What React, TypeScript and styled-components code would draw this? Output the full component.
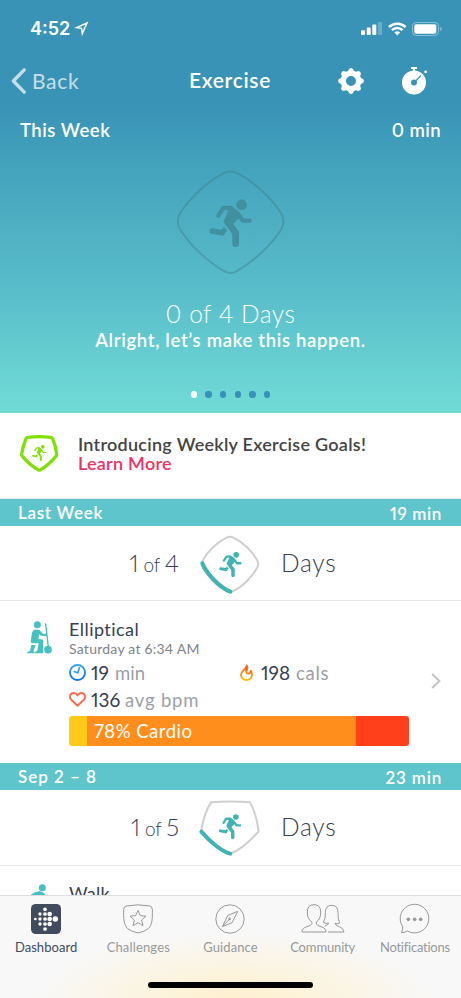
import React from 'react';
import styled, { createGlobalStyle } from 'styled-components';

const GlobalStyle = createGlobalStyle`
  * { box-sizing: border-box; }
  body { margin: 0; background: #fff; font-family: Lato, 'Open Sans', sans-serif; }
  svg { display: block; flex: none; overflow: visible; }
`;

const Screen = styled.div`
  width: 461px;
  height: 998px;
  display: flex;
  flex-direction: column;
  overflow: hidden;
  background: #fff;
`;

const Text = styled.span<{ $size: number; $weight?: number; $track?: number; $color?: string; $drop?: number }>`
  font-size: ${p => p.$size}px;
  font-weight: ${p => p.$weight ?? 400};
  letter-spacing: ${p => p.$track ?? 0}px;
  color: ${p => p.$color ?? 'inherit'};
  padding-top: ${p => p.$drop ?? 0}px;
  font-variant-numeric: proportional-nums;
  white-space: pre;
`;

/* ---------- Header ---------- */

const Header = styled.header`
  height: 413px;
  flex: none;
  display: flex;
  flex-direction: column;
  color: #fff;
  background: linear-gradient(180deg, #3993b6 0, #3993b6 108px, #419fbb 150px, #5bbfcb 300px, #70dcd6 413px);
`;

const StatusBar = styled.div`
  height: 56px;
  padding: 1px 19px 0 30px;
  display: flex;
  align-items: center;
  justify-content: space-between;
`;

const Clock = styled.div`
  display: flex;
  align-items: center;
  gap: 4.5px;
  font: 600 18px/22px Inter, sans-serif;
`;

const StatusIcons = styled.div`
  display: flex;
  align-items: center;
  gap: 6px;
`;

const NavBar = styled.nav`
  height: 50px;
  padding: 0 33px 0 11px;
  display: grid;
  grid-template-columns: 157px 124px 1fr;
  align-items: center;
  line-height: 24px;
`;

const BackLink = styled.div`
  display: flex;
  align-items: center;
  gap: 5px;
  opacity: 0.7;
`;

const NavTitle = styled.div`
  text-align: center;
  padding-bottom: 1px;
`;

const NavActions = styled.div`
  display: flex;
  align-items: center;
  justify-content: flex-end;
  gap: 38px;
`;

const WeekSummary = styled.div`
  height: 48px;
  padding: 0 20px;
  display: flex;
  align-items: center;
  justify-content: space-between;
`;

const Hero = styled.div`
  display: flex;
  flex-direction: column;
  align-items: center;
  padding-top: 14.6px;
`;

const HeroLine = styled.div<{ $height: number; $top?: number }>`
  height: ${p => p.$height}px;
  margin-top: ${p => p.$top ?? 0}px;
  display: flex;
  align-items: center;
`;

const Dots = styled.div`
  display: flex;
  gap: 8.4px;
  margin-top: 37.7px;
`;

const Dot = styled.i<{ $active?: boolean }>`
  width: 6.3px;
  height: 6.3px;
  border-radius: 50%;
  background: ${p => (p.$active ? '#fff' : '#3791b8')};
`;

/* ---------- Body ---------- */

const Content = styled.main`
  flex: 1;
  min-height: 0;
  overflow: hidden;
  color: #374053;
`;

const Promo = styled.div`
  height: 86px;
  padding: 0 19px 4px 20px;
  display: flex;
  align-items: center;
  gap: 19px;
  border-bottom: 1px solid #e2e9ea;
`;

const PromoCopy = styled.div`
  display: flex;
  flex-direction: column;
  line-height: 19px;
`;

const SectionBar = styled.div`
  height: 27px;
  padding: 0 19px 0 18px;
  display: flex;
  align-items: center;
  justify-content: space-between;
  color: #fff;
  background: #5fc5cc;
`;

const WeekRow = styled.div<{ $height: number }>`
  height: ${p => p.$height}px;
  display: grid;
  grid-template-columns: 179px 102px 1fr;
  align-items: center;
  border-bottom: 1.5px solid #e9e9ea;
`;

const Count = styled.div`
  display: flex;
  justify-content: flex-end;
  align-items: baseline;
  padding-bottom: 2px;
`;

const DaysLabel = styled.div`
  padding-bottom: 2px;
`;

const BadgeCell = styled.div`
  display: flex;
  justify-content: center;
  padding-top: 1.5px;
`;

const ExerciseRow = styled.div`
  height: 162px;
  padding: 17px 19px 0 27px;
  display: grid;
  grid-template-columns: 42px 340px 1fr;
`;

const IconCell = styled.div`
  padding-top: 3px;
`;

const Details = styled.div`
  display: flex;
  flex-direction: column;
`;

const Line = styled.div<{ $height: number }>`
  height: ${p => p.$height}px;
  display: flex;
  align-items: center;
`;

const Metrics = styled.div`
  margin-top: 2px;
  display: grid;
  grid-template-columns: 171px 1fr;
  grid-auto-rows: 27px;
`;

const Metric = styled.div<{ $iconWidth: number; $valueWidth: number }>`
  display: grid;
  grid-template-columns: ${p => p.$iconWidth}px ${p => p.$valueWidth}px auto;
  align-items: center;
  justify-content: start;
`;

const ZoneBar = styled.div`
  margin-top: 3px;
  height: 29.5px;
  display: flex;
  border-radius: 3px;
  overflow: hidden;
`;

const Zone = styled.div<{ $width: number; $color: string }>`
  width: ${p => p.$width}px;
  padding-left: 7px;
  display: flex;
  align-items: center;
  color: #fff;
  background: ${p => p.$color};
`;

const ChevronCell = styled.div`
  display: flex;
  justify-content: flex-end;
  padding: 55px 1px 0 0;
`;

const WalkRow = styled.div`
  padding: 16px 0 0 27px;
  display: grid;
  grid-template-columns: 42px 1fr;
`;

/* ---------- Tab bar ---------- */

const TabBar = styled.footer`
  height: 103px;
  flex: none;
  display: flex;
  flex-direction: column;
  align-items: center;
  border-top: 1px solid #dcdddd;
  background:
    radial-gradient(ellipse 200px 72px at 235px 108px, #fdf0cc 0, #fdf3d8cc 45%, #f8f8f800 100%),
    #f8f8f8;
`;

const Tabs = styled.div`
  width: 100%;
  height: 86px;
  display: grid;
  grid-template-columns: repeat(5, 1fr);
`;

const Tab = styled.div<{ $active?: boolean }>`
  display: flex;
  flex-direction: column;
  align-items: center;
  padding-top: 8px;
  gap: 5px;
  line-height: 16px;
  color: ${p => (p.$active ? '#414b5e' : '#97999b')};
`;

const HomeIndicator = styled.div`
  width: 165px;
  height: 6px;
  border-radius: 3px;
  background: #000;
`;

/* ---------- Drawings ---------- */

const Runner = ({ color, transform, thin }: { color: string; transform?: string; thin?: boolean }) => {
  const k = thin ? 0.85 : 1;
  return (
    <g transform={transform} fill="none" stroke={color} strokeLinecap="round" strokeLinejoin="round">
      <circle cx="275" cy="162" r="16" fill={color} stroke="none" />
      <path d="M205 195 L220 172 H242 L264 190 L279 210 H299" strokeWidth={13 * k} />
      <path d="M240 172 L262 186 L264 198 L247 216 L233 222 L226 212 L238 186Z" fill={color} strokeWidth={10 * k} />
      <path d="M236 218 L257 246 V279" strokeWidth={20 * k} />
      <path d="M187 241 L217 246" strokeWidth={17 * k} />
      <path d="M215 254 L231 240 L222 230 L212 242Z" fill={color} strokeWidth={2} />
    </g>
  );
};

const HeroBadge = () => (
  <svg width="111.3" height="106.7" viewBox="75 55 334 320">
    <path
      d="M225 66 Q241 59 258 66 C310 90 367 145 395 190 Q406 212 395 234 C367 280 310 334 258 363 Q241 371 225 363 C173 334 117 280 89 234 Q78 212 89 190 C117 145 173 90 225 66Z"
      fill="none" stroke="#3e818d" strokeOpacity=".48" strokeWidth="5.5"
    />
    <Runner color="#40909f" />
  </svg>
);

const DiamondBadge = () => (
  <svg width="60" height="60" viewBox="241 25 180 180">
    <path
      d="M321 36 Q331 31 341 36 C370 49 398 78 412 103 Q419 115 412 127 C398 152 370 183 341 196 Q331 201 321 196 C292 183 264 152 250 127 Q243 115 250 103 C264 78 292 49 321 36Z"
      fill="none" stroke="#cfcfcf" strokeWidth="6"
    />
    <path d="M248 113 C263 147 301 186 332 198" fill="none" stroke="#3fb4b3" strokeWidth="12" strokeLinecap="round" />
    <Runner color="#3fb4b3" transform="translate(204.5 2) scale(.5276)" />
  </svg>
);

const PentagonBadge = () => (
  <svg width="62" height="56" viewBox="29 49 186 168">
    <path
      d="M65 56 Q123 51 182 56 Q200 87 208 143 C182 173 151 200 123 210 C95 200 64 173 35 143 Q45 87 65 56Z"
      fill="none" stroke="#cfcfcf" strokeWidth="6" strokeLinejoin="round"
    />
    <path d="M36 144 C61 173 97 204 123 210" fill="none" stroke="#3fb4b3" strokeWidth="12" strokeLinecap="round" />
    <Runner color="#3fb4b3" transform="translate(-5.5 14.5) scale(.5276)" />
  </svg>
);

const GoalIcon = () => (
  <svg width="39" height="37.3" viewBox="62 77 117 112">
    <path
      d="M86 84 Q120 80 154 84 Q158 84 160 88 Q169 110 172 133 Q173 138 169 142 Q147 168 124 181 Q120 184 116 181 Q92 168 70 142 Q66 138 67 133 Q71 110 80 88 Q82 84 86 84Z"
      fill="none" stroke="#80e008" strokeWidth="10"
    />
    <Runner color="#80e008" transform="translate(37 57.5) scale(.34)" thin />
  </svg>
);

const LocationArrow = () => (
  <svg width="13" height="13" viewBox="0 0 13 13">
    <path d="M12 1 L1.6 5.7 L6.6 6.4 L7.3 11.6 Z" fill="none" stroke="#fff" strokeWidth="1.4" strokeLinejoin="miter" />
  </svg>
);

const Signal = () => (
  <svg width="21" height="13" viewBox="0 0 21 13" fill="#fff">
    <rect x="0" y="8.3" width="4" height="4.7" rx="1" />
    <rect x="5.7" y="5.6" width="4" height="7.4" rx="1" />
    <rect x="11.3" y="2.6" width="4" height="10.4" rx="1" />
    <rect x="17" y="0" width="4" height="13" rx="1" opacity=".25" />
  </svg>
);

const Wifi = () => (
  <svg width="18.5" height="13.5" viewBox="0 0 18.5 13.5" fill="none" stroke="#fff" strokeWidth="2.5">
    <path d="M1 5 A11.8 11.8 0 0 1 17.5 5" />
    <path d="M3.9 8.2 A7.7 7.7 0 0 1 14.6 8.2" />
    <path d="M9.25 13.5 L6.4 10.6 A4.1 4.1 0 0 1 12.1 10.6 Z" fill="#fff" stroke="none" />
  </svg>
);

const Battery = () => (
  <svg width="30" height="14" viewBox="0 0 30 14">
    <rect x=".5" y=".5" width="26" height="13" rx="3.6" fill="none" stroke="#fff" strokeOpacity=".4" />
    <rect x="2.3" y="2.3" width="22" height="9.4" rx="1.8" fill="#fff" />
    <path d="M28.2 4.8 q1.8 .8 1.6 2.2 q0 1.5-1.6 2.2z" fill="#fff" opacity=".4" />
  </svg>
);

const BackChevron = () => (
  <svg width="16" height="26" viewBox="0 0 16 26">
    <path d="M13.2 1.9 L2.4 13 L13.2 24.1" fill="none" stroke="#fff" strokeWidth="3.4" strokeLinecap="round" strokeLinejoin="round" />
  </svg>
);

const gearTeeth = [0, 45, 90, 135, 180, 225, 270, 315];
const Gear = () => (
  <svg width="26" height="26" viewBox="-13 -13 26 26">
    <circle r="7.7" fill="none" stroke="#fff" strokeWidth="5.4" />
    {gearTeeth.map(a => (
      <path key={a} transform={`rotate(${a})`} d="M-3.4 -9.2 L-1.8 -12.3 Q0 -13.6 1.8 -12.3 L3.4 -9.2Z" fill="#fff" />
    ))}
  </svg>
);

const Stopwatch = () => (
  <svg width="26" height="28" viewBox="0 0 26 28">
    <circle cx="12" cy="15.5" r="12" fill="#fff" />
    <path d="M9 1 H15 M12 1 V4.5" stroke="#fff" strokeWidth="2" fill="none" />
    <circle cx="23.6" cy="4.8" r="1.4" fill="#fff" />
    <path d="M12 15.5 L19 8.5" stroke="#3993b6" strokeWidth="1.1" />
    <circle cx="12" cy="15.5" r="3" fill="#3993b6" />
  </svg>
);

const EllipticalIcon = () => (
  <svg width="25" height="33" viewBox="81 64 75 99" fill="#48bfc1">
    <circle cx="112" cy="75.5" r="10.5" />
    <path d="M104 90 Q98 91 96 99 L92 125 Q91 131 98 131 L116 131 L112 153 L105 157 V161 H129 L130 127 Q131 119 123 119 L115 118 L118 104 Q122 109 128 109 H141 V102 H129 L119 92 Q115 89 104 90Z" />
    <path d="M94 136 L107 136 L100 155 L104 157 V161 H81 Q82 155 90 154Z" />
    <path d="M137 73 L145 142" fill="none" stroke="#48bfc1" strokeWidth="4.2" strokeLinecap="round" />
    <circle cx="144" cy="150" r="11.5" />
  </svg>
);

const WalkIcon = () => (
  <svg width="25" height="33" viewBox="81 68 75 99" fill="#48bfc1">
    <circle cx="127" cy="85" r="10.5" />
    <path d="M92 106 Q104 98 116 96 Q128 95 136 107 V130 H110 L92 112Z" />
  </svg>
);

const TimeIcon = () => (
  <svg width="17" height="17" viewBox="0 0 17 17" fill="none">
    <defs>
      <linearGradient id="timeBlue" x1="0" y1="0" x2="0" y2="1">
        <stop offset="0" stopColor="#39a5f5" />
        <stop offset="1" stopColor="#0a74f0" />
      </linearGradient>
    </defs>
    <circle cx="8.5" cy="8.5" r="7.5" stroke="url(#timeBlue)" strokeWidth="1.9" />
    <path d="M10.3 3.9 L8.7 8.9 L5.2 7.6" stroke="#2f9af3" strokeWidth="1.6" strokeLinecap="round" strokeLinejoin="round" />
  </svg>
);

const HeartIcon = () => (
  <svg width="17" height="15" viewBox="0 0 17 15">
    <path
      d="M8.5 13.8 L2.2 7.8 C-.4 5 1.2 1 4.6 1 C6.5 1 7.7 2 8.5 3.4 C9.3 2 10.5 1 12.4 1 C15.8 1 17.4 5 14.8 7.8Z"
      fill="none" stroke="#fb6a4f" strokeWidth="1.9" strokeLinejoin="round"
    />
  </svg>
);

const FlameIcon = () => (
  <svg width="13" height="17" viewBox="0 0 13 17">
    <defs>
      <linearGradient id="flame" gradientUnits="userSpaceOnUse" x1="0" y1="0" x2="0" y2="17">
        <stop offset="0" stopColor="#ff5a1f" />
        <stop offset=".55" stopColor="#ff8514" />
        <stop offset="1" stopColor="#ffc20e" />
      </linearGradient>
    </defs>
    <path
      d="M6.4 2.5 C5.6 5.6 1 6.8 1 10.8 C1 14 3.4 16 6.4 16 C9.6 16 12 13.9 12 10.8 C12 9 11.5 7.8 10.9 6.8 C10.7 8.4 9.8 9.6 8.2 9.6 C6.4 9.5 5.8 8 6.5 6.5"
      fill="none" stroke="url(#flame)" strokeWidth="1.9" strokeLinecap="round" strokeLinejoin="round"
    />
    <path d="M6.3 0 C8.8 1.6 8.6 4.2 7.4 7 L4.3 6 C5.8 3.7 6.6 2.4 6.3 0Z" fill="#ff651b" />
  </svg>
);

const Disclosure = () => (
  <svg width="10" height="16" viewBox="0 0 10 16">
    <path d="M1.2 1 L8.3 8 L1.2 15" fill="none" stroke="#c5c6ca" strokeWidth="2.1" />
  </svg>
);

const logoDots: [number, number, number][] = [
  [13, 45, 4], [27, 30, 5], [27, 45, 5], [27, 60, 5],
  [42, 16, 5.6], [42, 30, 5.6], [42, 45, 5.6], [42, 60, 5.6], [42, 75, 5.6],
  [56, 30, 7], [56, 45, 7], [56, 60, 7], [73, 45, 8.2],
];
const DashboardIcon = () => (
  <svg width="30" height="30" viewBox="0 0 90 90">
    <rect width="90" height="90" rx="14" fill="#414b5e" />
    {logoDots.map(([x, y, r]) => <circle key={`${x}-${y}`} cx={x} cy={y} r={r} fill="#fff" />)}
  </svg>
);

const ChallengesIcon = () => (
  <svg width="30" height="30" viewBox="369 134 90 90" fill="none" stroke="#97999b" strokeWidth="3" strokeLinejoin="round">
    <path d="M379 140 Q414 133 449 140 Q457 142 457 150 C458 178 456 197 446 207 Q434 217 414 221 Q394 217 382 207 C372 197 370 178 371 150 Q371 142 379 140Z" />
    <path d="M414 153 L420.8 169 L438 170.5 L425 182 L429 199 L414 190 L399 199 L403 182 L390 170.5 L407.2 169Z" />
  </svg>
);

const GuidanceIcon = () => (
  <svg width="30" height="30" viewBox="0 0 30 30" fill="none" stroke="#97999b" strokeWidth="1" strokeLinejoin="round">
    <circle cx="15" cy="15" r="14.2" />
    <path d="M22.6 7.4 L12.8 11.4 L7.4 22.6 L17.2 18.6Z" />
    <circle cx="14.6" cy="14.9" r="1.3" fill="#97999b" stroke="none" />
    <path d="M14.2 15.5 L7.6 22.3" />
  </svg>
);

const CommunityIcon = () => (
  <svg width="44" height="30" viewBox="211 134 132 90" fill="none" stroke="#97999b" strokeWidth="3" strokeLinejoin="round" strokeLinecap="round">
    <path d="M243 188 Q229 178 230 158 Q230 136 250 136 Q270 136 270 158 Q271 178 257 188 V194 Q259 199 271 202 Q286 206 286 218 H214 Q214 206 229 202 Q241 199 243 194Z" />
    <path d="M293 218 H340 Q338 206 326 202 Q315 199 313 192 Q321 195 327 191 Q321 180 322 160 Q322 138 303 138 Q284 138 284 160 Q285 180 278 189 Q286 195 294 191 Q293 197 283 200" />
  </svg>
);

const NotificationsIcon = () => (
  <svg width="30" height="30" viewBox="510 134 90 90" fill="none" stroke="#97999b" strokeWidth="3" strokeLinejoin="round">
    <path d="M518 202 A43 43 0 1 1 532 215 Q525 220 514 220 Q519 212 518 202Z" />
    <g fill="#97999b" stroke="none">
      <circle cx="535" cy="180" r="5.5" />
      <circle cx="554" cy="180" r="5.5" />
      <circle cx="572" cy="180" r="5.5" />
    </g>
  </svg>
);

/* ---------- Page ---------- */

const GREY = '#9b9fa6';

const WeekGoal = ({ height, goal, badge }: { height: number; goal: string; badge: React.ReactNode }) => (
  <WeekRow $height={height}>
    <Count>
      <Text $size={24} $weight={300}>1</Text>
      <Text $size={19} $weight={300} $track={-0.2}> of </Text>
      <Text $size={24} $weight={300}>{goal}</Text>
    </Count>
    <BadgeCell>{badge}</BadgeCell>
    <DaysLabel><Text $size={24.5} $weight={300} $track={0.7}>Days</Text></DaysLabel>
  </WeekRow>
);

const tabs: { label: string; icon: React.ReactNode; track: number; active?: boolean }[] = [
  { label: 'Dashboard', icon: <DashboardIcon />, track: 0.05, active: true },
  { label: 'Challenges', icon: <ChallengesIcon />, track: 0.15 },
  { label: 'Guidance', icon: <GuidanceIcon />, track: 0.1 },
  { label: 'Community', icon: <CommunityIcon />, track: -0.15 },
  { label: 'Notifications', icon: <NotificationsIcon />, track: -0.25 },
];

export default function App() {
  return (
    <Screen>
      <GlobalStyle />
      <Header>
        <StatusBar>
          <Clock>4:52<LocationArrow /></Clock>
          <StatusIcons><Signal /><Wifi /><Battery /></StatusIcons>
        </StatusBar>
        <NavBar>
          <BackLink><BackChevron /><Text $size={21} $track={0.7}>Back</Text></BackLink>
          <NavTitle><Text $size={21} $weight={600} $track={0.7}>Exercise</Text></NavTitle>
          <NavActions><Gear /><Stopwatch /></NavActions>
        </NavBar>
        <WeekSummary>
          <Text $size={18.5} $weight={600} $track={0.5}>This Week</Text>
          <Text $size={18.5} $weight={600} $track={0.4}>0 min</Text>
        </WeekSummary>
        <Hero>
          <HeroBadge />
          <HeroLine $height={26} $top={25.3}><Text $size={24.5} $weight={300} $track={0.5}>0 of 4 Days</Text></HeroLine>
          <HeroLine $height={27}><Text $size={18.5} $weight={600} $track={0.67}>Alright, let’s make this happen.</Text></HeroLine>
          <Dots>
            <Dot $active /><Dot /><Dot /><Dot /><Dot /><Dot />
          </Dots>
        </Hero>
      </Header>

      <Content>
        <Promo>
          <GoalIcon />
          <PromoCopy>
            <Text $size={18} $weight={600} $track={0.27} $color="#444">Introducing Weekly Exercise Goals!</Text>
            <Text $size={18} $weight={600} $track={0.25} $color="#ef3166">Learn More</Text>
          </PromoCopy>
        </Promo>

        <SectionBar>
          <Text $size={17} $weight={600} $track={0.7}>Last Week</Text>
          <Text $size={17} $weight={600} $track={0.6} $drop={2}>19 min</Text>
        </SectionBar>
        <WeekGoal height={75} goal="4" badge={<DiamondBadge />} />

        <ExerciseRow>
          <IconCell><EllipticalIcon /></IconCell>
          <Details>
            <Line $height={22}><Text $size={18} $track={0.45}>Elliptical</Text></Line>
            <Line $height={17}><Text $size={14} $track={0.25} $color="#808389">Saturday at 6:34 AM</Text></Line>
            <Metrics>
              <Metric $iconWidth={22} $valueWidth={24}>
                <TimeIcon />
                <Text $size={19}>19</Text>
                <Text $size={18.5} $color={GREY}>min</Text>
              </Metric>
              <Metric $iconWidth={21} $valueWidth={35}>
                <FlameIcon />
                <Text $size={19}>198</Text>
                <Text $size={18.5} $track={0.7} $color={GREY}>cals</Text>
              </Metric>
              <Metric $iconWidth={22} $valueWidth={34}>
                <HeartIcon />
                <Text $size={19}>136</Text>
                <Text $size={18.5} $track={0.8} $color={GREY}>avg bpm</Text>
              </Metric>
            </Metrics>
            <ZoneBar>
              <Zone $width={18} $color="#ffcb18" />
              <Zone $width={268.5} $color="#ff8e1c"><Text $size={18.5} $track={0.5}>78% Cardio</Text></Zone>
              <Zone $width={53.5} $color="#ff401a" />
            </ZoneBar>
          </Details>
          <ChevronCell><Disclosure /></ChevronCell>
        </ExerciseRow>

        <SectionBar>
          <Text $size={17} $weight={600} $track={1}>Sep 2 – 8</Text>
          <Text $size={17} $weight={600} $track={0.8} $drop={2}>23 min</Text>
        </SectionBar>
        <WeekGoal height={76} goal="5" badge={<PentagonBadge />} />

        <WalkRow>
          <WalkIcon />
          <Text $size={18} $track={0.2}>Walk</Text>
        </WalkRow>
      </Content>

      <TabBar>
        <Tabs>
          {tabs.map(t => (
            <Tab key={t.label} $active={t.active}>
              {t.icon}
              <Text $size={13} $track={t.track}>{t.label}</Text>
            </Tab>
          ))}
        </Tabs>
        <HomeIndicator />
      </TabBar>
    </Screen>
  );
}
